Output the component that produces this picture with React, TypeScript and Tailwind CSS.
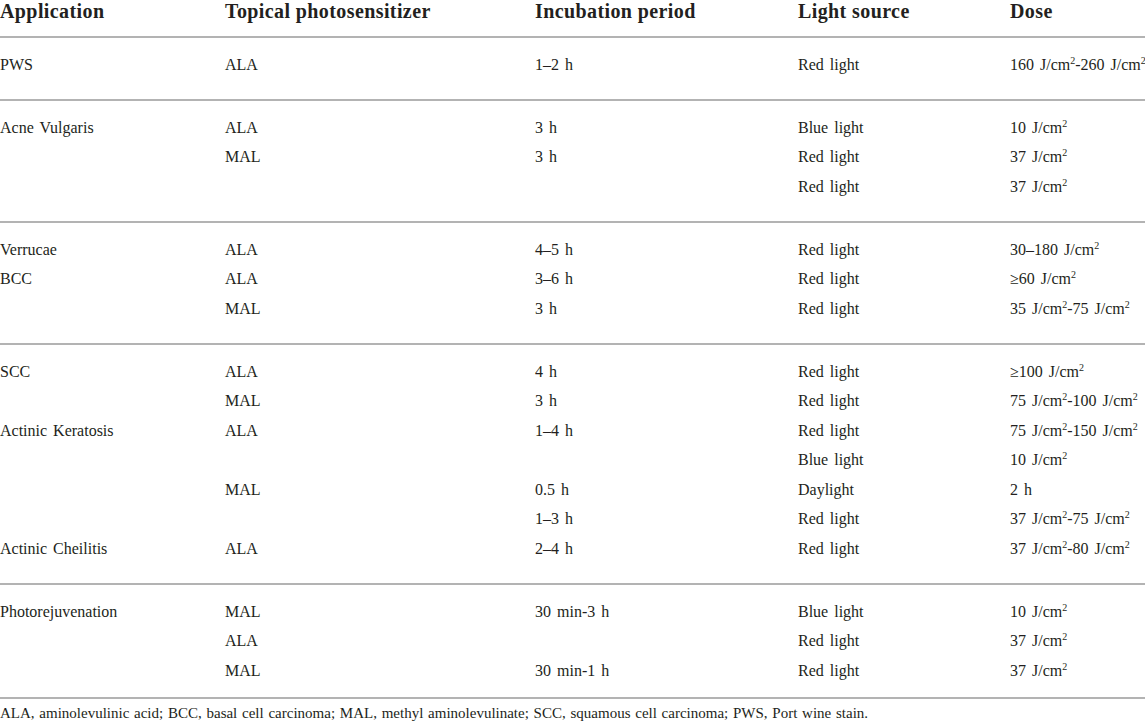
import React from 'react';

type Row = [string, string, string, string, React.ReactNode];

const sq = <sup className="text-[10px] top-[-0.6em]">2</sup>;
const J = (n: string) => (
  <>
    {n} J/cm{sq}
  </>
);
const range = (a: string, b: string) => (
  <>
    {J(a)}-{J(b)}
  </>
);

const groups: Row[][] = [
  [['PWS', 'ALA', '1–2 h', 'Red light', range('160', '260')]],
  [
    ['Acne Vulgaris', 'ALA', '3 h', 'Blue light', J('10')],
    ['', 'MAL', '3 h', 'Red light', J('37')],
    ['', '', '', 'Red light', J('37')],
  ],
  [
    ['Verrucae', 'ALA', '4–5 h', 'Red light', <>30–180 J/cm{sq}</>],
    ['BCC', 'ALA', '3–6 h', 'Red light', J('≥60')],
    ['', 'MAL', '3 h', 'Red light', range('35', '75')],
  ],
  [
    ['SCC', 'ALA', '4 h', 'Red light', J('≥100')],
    ['', 'MAL', '3 h', 'Red light', range('75', '100')],
    ['Actinic Keratosis', 'ALA', '1–4 h', 'Red light', range('75', '150')],
    ['', '', '', 'Blue light', J('10')],
    ['', 'MAL', '0.5 h', 'Daylight', '2 h'],
    ['', '', '1–3 h', 'Red light', range('37', '75')],
    ['Actinic Cheilitis', 'ALA', '2–4 h', 'Red light', range('37', '80')],
  ],
  [
    ['Photorejuvenation', 'MAL', '30 min-3 h', 'Blue light', J('10')],
    ['', 'ALA', '', 'Red light', J('37')],
    ['', 'MAL', '30 min-1 h', 'Red light', J('37')],
  ],
];

const cols = 'grid grid-cols-[225px_310px_263px_212px_1fr]';
const headers = ['Application', 'Topical photosensitizer', 'Incubation period', 'Light source', 'Dose'];

function Rule() {
  return <div className="h-[2px] bg-[#b3b3b3]" />;
}

export default function App() {
  return (
    <div
      className="w-[1145px] h-[721px] overflow-hidden bg-white text-[#231f20]"
      style={{ fontFamily: '"Liberation Serif", "DejaVu Serif", serif' }}
    >
      <div className={`${cols} pb-[14px] text-[20px] font-bold leading-[22px] tracking-[0.4px]`}>
        {headers.map(h => (
          <div key={h} className="whitespace-nowrap">{h}</div>
        ))}
      </div>
      <Rule />
      {groups.map((g, gi) => (
        <div key={gi}>
          <div className={gi === groups.length - 1 ? 'pt-[11.5px] pb-[12px]' : 'pt-[11.5px] pb-[20px]'}>
            {g.map((r, ri) => (
              <div key={ri} className={`${cols} h-[29.5px] text-[16px] leading-[29.5px] [word-spacing:2px]`}>
                {r.map((c, ci) => (
                  <div key={ci} className="whitespace-nowrap">{c}</div>
                ))}
              </div>
            ))}
          </div>
          <Rule />
        </div>
      ))}
      <p className="text-[15px] leading-[22px] pt-[3px] whitespace-nowrap [word-spacing:1px]">
        ALA, aminolevulinic acid; BCC, basal cell carcinoma; MAL, methyl aminolevulinate; SCC, squamous cell
        carcinoma; PWS, Port wine stain.
      </p>
    </div>
  );
}
